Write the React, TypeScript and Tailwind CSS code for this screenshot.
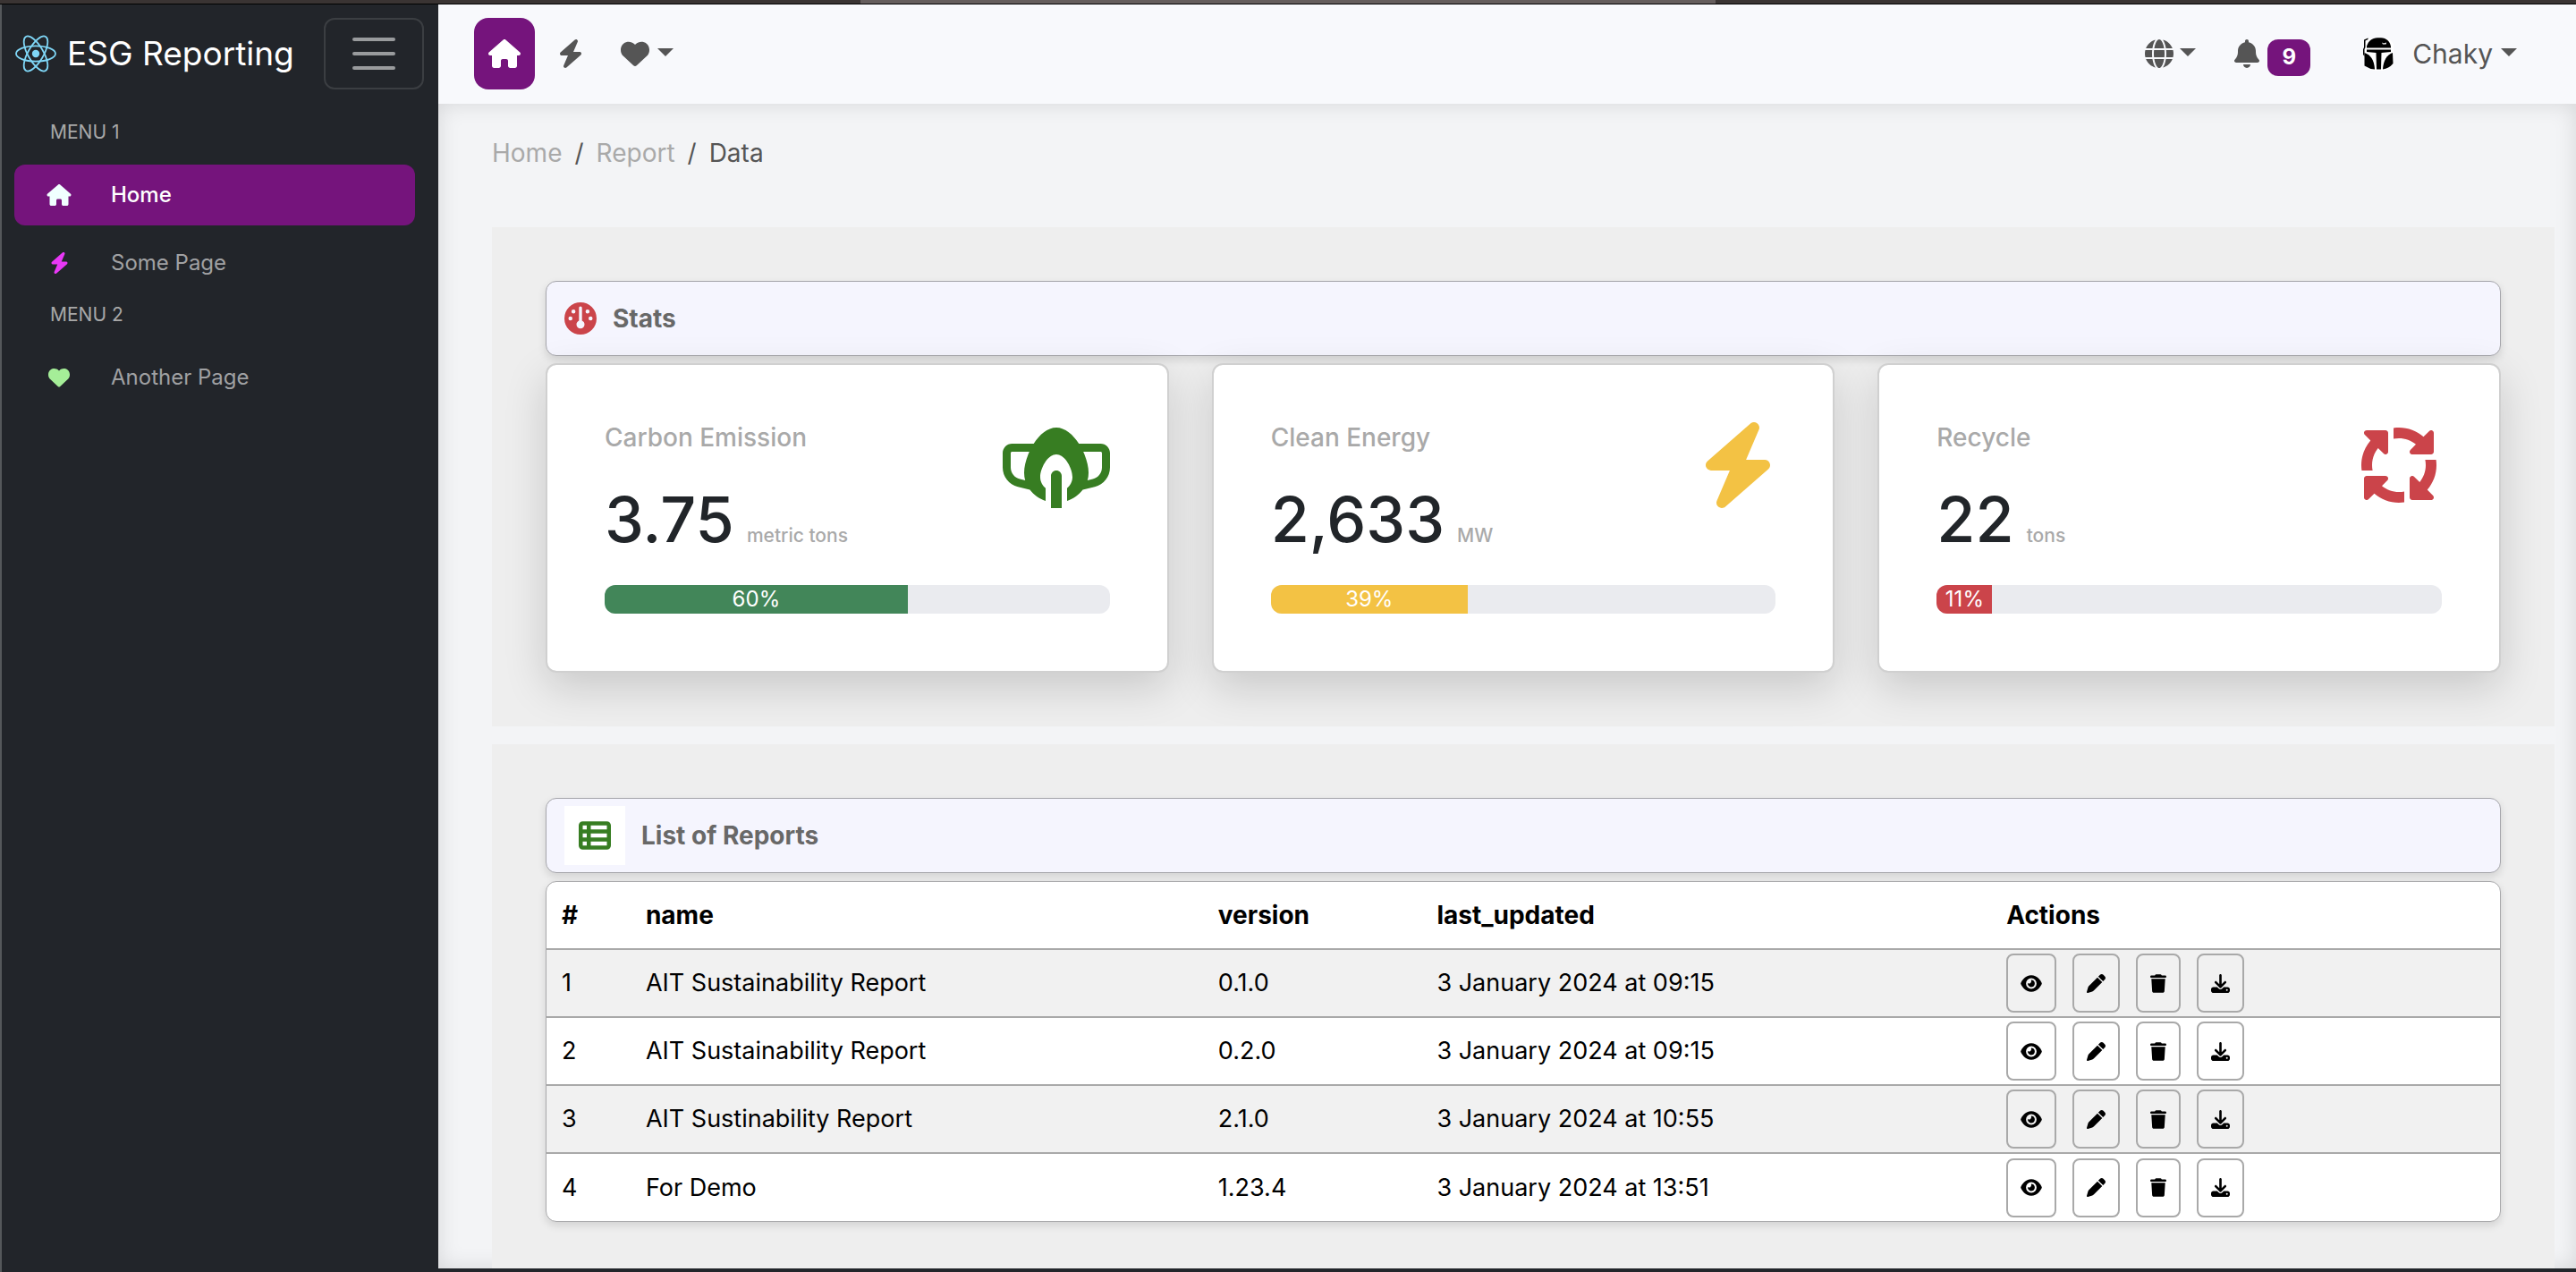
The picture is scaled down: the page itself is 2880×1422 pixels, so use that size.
import React from "react";
import {
  FaArrowsSpin,
  FaBell,
  FaBolt,
  FaDownload,
  FaEye,
  FaGauge,
  FaGlobe,
  FaHeart,
  FaHouse,
  FaMaskVentilator,
  FaPen,
  FaTableList,
  FaTrash,
} from "react-icons/fa6";

function ReactLogo() {
  return (
    <svg viewBox="0 0 46 42" className="h-[42px] w-[46px] shrink-0" fill="none" stroke="#7fd7f7" strokeWidth="1.8" aria-hidden="true">
      <circle cx="23" cy="21" r="4.2" fill="#7fd7f7" stroke="none" />
      <ellipse cx="23" cy="21" rx="22" ry="8.6" />
      <ellipse cx="23" cy="21" rx="22" ry="8.6" transform="rotate(60 23 21)" />
      <ellipse cx="23" cy="21" rx="22" ry="8.6" transform="rotate(120 23 21)" />
    </svg>
  );
}

function Helmet() {
  return (
    <svg viewBox="0 0 36 38" className="h-[38px] w-9" aria-hidden="true">
      <path d="M4 2 H30 L35 8 V32 L24 38 H12 L2 32 V8 Z" fill="#fff" />
      <path d="M5 12.500 V10.500 C7 4.500 11 1.500 17 1.200 H21 C27 1.500 31 5 32 11 V12.500 Z" fill="#000" />
      <path d="M22 6.500 L24 7.500 L27 6.500 L26.500 8.500 L23 8.500 Z" fill="#fff" />
      <path d="M2 3.500 L6.500 1.500 V3 L3.500 4.500 V12 L2.500 14 V22 L1 20 V14 L2 12 Z" fill="#000" />
      <path d="M5 14.500 H32 V17 L21.500 18 L21 36.500 H16 L15.500 18 L5 17 Z" fill="#000" />
      <path d="M2.500 18 C9 20 13.500 26 14 36.500 L9.500 36 L2.500 32.500 Z" fill="#000" />
      <path d="M34 18 L34.500 30 C31 34 27.500 36 23 36.500 C23.500 27 27.500 20 34 18 Z" fill="#000" />
    </svg>
  );
}

function Caret() {
  return (
    <svg viewBox="0 0 18 9" className="mb-1 h-[9px] w-[18px]" fill="#555" aria-hidden="true">
      <path d="M0 0 H18 L9 9 Z" />
    </svg>
  );
}

function MenuLabel({ children }: { children: React.ReactNode }) {
  return <h2 className="mb-3 flex h-12 items-center pl-10 text-[21px] text-[#a8a8a8]">{children}</h2>;
}

function MenuLink({ icon, label, active }: { icon: React.ReactNode; label: string; active?: boolean }) {
  return (
    <a
      href="#"
      aria-current={active ? "page" : undefined}
      className={
        active
          ? "flex h-[68px] items-center rounded-xl bg-[#75147c] pl-9 text-2xl font-medium text-white"
          : "flex h-[68px] items-center rounded-xl pl-9 text-2xl text-[#a0a1a3]"
      }
    >
      <span className="flex w-[72px] shrink-0">
        <span className="flex w-7 justify-center">{icon}</span>
      </span>
      {label}
    </a>
  );
}

function Sidebar() {
  return (
    <aside className="w-[490px] shrink-0 border-l-2 border-[#55585b] bg-[#22252a]">
      <div className="flex h-[110px] items-center justify-between pl-[15px] pr-4">
        <a href="#" className="flex items-center gap-3 text-[37px] text-white">
          <ReactLogo />
          ESG Reporting
        </a>
        <button
          type="button"
          aria-label="Toggle sidebar"
          className="flex h-20 w-28 flex-col items-center justify-center gap-3 rounded-xl border-2 border-[#3b3e42]"
        >
          <span className="h-1 w-12 rounded-full bg-[#999b9d]" />
          <span className="h-1 w-12 rounded-full bg-[#999b9d]" />
          <span className="h-1 w-12 rounded-full bg-[#999b9d]" />
        </button>
      </div>
      <nav aria-label="Sidebar" className="pl-[14px] pr-[26px] pt-[9px]">
        <MenuLabel>MENU 1</MenuLabel>
        <div className="flex flex-col gap-2">
          <MenuLink active label="Home" icon={<FaHouse className="h-6 w-7 text-[#f0ffff]" />} />
          <MenuLink label="Some Page" icon={<FaBolt className="h-6 w-[21px] text-[#e838f5]" />} />
        </div>
        <MenuLabel>MENU 2</MenuLabel>
        <MenuLink label="Another Page" icon={<FaHeart className="size-6 text-[#a5ee98]" />} />
      </nav>
    </aside>
  );
}

function Navbar() {
  return (
    <header className="flex h-[111px] items-center justify-between bg-[#f8f9fc] pb-px pl-10 pr-[66px] text-[#555]">
      <nav aria-label="Main" className="flex items-center">
        <a href="#" aria-label="Home" className="flex h-20 w-[68px] items-center justify-center rounded-2xl bg-[#75147c] text-white">
          <FaHouse className="h-8 w-9" />
        </a>
        <a href="#" aria-label="Energy" className="ml-[26px]">
          <FaBolt className="h-8 w-7" />
        </a>
        <button type="button" aria-label="Favourites" className="ml-[42px] flex items-center gap-[9px]">
          <FaHeart className="size-8" />
          <Caret />
        </button>
      </nav>
      <div className="flex items-center">
        <button type="button" aria-label="Language" className="flex items-center gap-[7px]">
          <FaGlobe className="size-8" />
          <Caret />
        </button>
        <button type="button" aria-label="Notifications, 9 new" className="ml-[43px] flex items-center gap-[9px]">
          <FaBell className="h-8 w-7" />
          <span className="mt-2 flex h-[41px] w-12 items-center justify-center rounded-xl bg-[#75147c] text-2xl font-bold text-white">9</span>
        </button>
        <button type="button" className="ml-[58px] flex items-center text-[30px] leading-10">
          <Helmet />
          <span className="ml-5 mr-[9px]">Chaky</span>
          <Caret />
        </button>
      </div>
    </header>
  );
}

function PanelHeader({ icon, title }: { icon: React.ReactNode; title: string }) {
  return (
    <div className="flex h-[84px] items-center gap-[18px] rounded-xl border border-[#a6a6ab] bg-[#f5f5fe] pl-5 shadow-[0_4px_10px_rgba(0,0,0,0.12)]">
      {icon}
      <h2 className="text-[28px] font-bold text-[#686868]">{title}</h2>
    </div>
  );
}

type Stat = {
  title: string;
  value: string;
  unit: string;
  percent: number;
  bar: string;
  icon: React.ReactNode;
};

const stats: Stat[] = [
  {
    title: "Carbon Emission",
    value: "3.75",
    unit: "metric tons",
    percent: 60,
    bar: "bg-[#428659]",
    icon: <FaMaskVentilator className="h-24 w-[120px] text-[#377d22]" />,
  },
  {
    title: "Clean Energy",
    value: "2,633",
    unit: "MW",
    percent: 39,
    bar: "bg-[#f3c244]",
    icon: <FaBolt className="h-24 w-[84px] text-[#f3c244]" />,
  },
  {
    title: "Recycle",
    value: "22",
    unit: "tons",
    percent: 11,
    bar: "bg-[#cb444a]",
    icon: <FaArrowsSpin className="size-24 text-[#cb444a]" />,
  },
];

function StatCard({ stat }: { stat: Stat }) {
  return (
    <article className="flex-1 rounded-xl border-2 border-[#d0d0d0] bg-white bg-clip-padding p-16 shadow-[0_16px_48px_rgba(0,0,0,0.16)]">
      <div className="flex items-start justify-between">
        <div>
          <h3 className="text-[28px] font-medium leading-[34px] text-[#a9a9a9]">{stat.title}</h3>
          <p className="mt-8 flex items-baseline gap-[14px] text-[70px] font-medium leading-[86px] text-[#212529]">
            {stat.value}
            <span className="text-[21px] leading-6 text-[#a9a9a9]">{stat.unit}</span>
          </p>
        </div>
        {stat.icon}
      </div>
      <div
        role="progressbar"
        aria-label={stat.title}
        aria-valuenow={stat.percent}
        aria-valuemin={0}
        aria-valuemax={100}
        className="mt-[30px] flex h-8 overflow-hidden rounded-xl bg-[#eaebef] text-2xl text-white"
      >
        <div className={`flex items-center justify-center ${stat.bar}`} style={{ width: `${stat.percent}%` }}>
          {stat.percent}%
        </div>
      </div>
    </article>
  );
}

const reports = [
  { id: 1, name: "AIT Sustainability Report", version: "0.1.0", updated: "3 January 2024 at 09:15" },
  { id: 2, name: "AIT Sustainability Report", version: "0.2.0", updated: "3 January 2024 at 09:15" },
  { id: 3, name: "AIT Sustinability Report", version: "2.1.0", updated: "3 January 2024 at 10:55" },
  { id: 4, name: "For Demo", version: "1.23.4", updated: "3 January 2024 at 13:51" },
];

const actions = [
  { label: "View", icon: <FaEye className="h-[21px] w-6" /> },
  { label: "Edit", icon: <FaPen className="size-[21px]" /> },
  { label: "Delete", icon: <FaTrash className="h-[21px] w-[18px]" /> },
  { label: "Download", icon: <FaDownload className="size-[21px]" /> },
];

function ReportTable() {
  return (
    <div className="mt-[9px] overflow-hidden rounded-xl border border-[#a9a9ab] bg-white shadow-[0_4px_10px_rgba(0,0,0,0.12)]">
      <table className="w-full table-fixed border-collapse text-left text-[27px] leading-[42px] text-black">
        <thead className="text-[28px]">
          <tr className="h-[75px] border-b-2 border-[#a9a9a9]">
            <th scope="col" className="w-[4.3%] pl-[17px] font-bold">#</th>
            <th scope="col" className="w-[29.3%] pl-[17px] font-bold">name</th>
            <th scope="col" className="w-[11.2%] pl-[17px] font-bold">version</th>
            <th scope="col" className="w-[29.2%] pl-[17px] font-bold">last_updated</th>
            <th scope="col" className="pl-4 font-bold">Actions</th>
          </tr>
        </thead>
        <tbody>
          {reports.map((r) => (
            <tr key={r.id} className="h-[76px] border-b-2 border-[#a9a9a9] last:border-b-0 odd:bg-[#f1f1f1]">
              <td className="pl-[17px]">{r.id}</td>
              <td className="pl-[17px]">{r.name}</td>
              <td className="pl-[17px]">{r.version}</td>
              <td className="pl-[17px]">{r.updated}</td>
              <td className="pl-4">
                <div className="flex gap-[18px]">
                  {actions.map((a) => (
                    <button
                      key={a.label}
                      type="button"
                      aria-label={`${a.label} report ${r.id}`}
                      className="flex h-[66px] items-center rounded-lg border-2 border-[#a9a9a9] px-[14px]"
                    >
                      {a.icon}
                    </button>
                  ))}
                </div>
              </td>
            </tr>
          ))}
        </tbody>
      </table>
    </div>
  );
}

export default function App() {
  return (
    <div className="flex min-h-screen flex-col bg-[#22252a] font-['Inter',sans-serif]">
      <div className="flex h-[5px] border-b border-black bg-[#3a3433]">
        <div className="ml-[33.4%] w-[33.2%] bg-[#665e5d]" />
      </div>
      <div className="flex flex-1">
        <Sidebar />
        <div className="mb-1 flex min-w-0 flex-1 flex-col">
          <Navbar />
          <main className="flex flex-1 flex-col bg-[#f3f4f6] pl-[60px] pr-6 pt-[34px] shadow-[inset_0_0_24px_rgba(0,0,0,0.12)]">
            <nav aria-label="Breadcrumb" className="mb-[62px] text-[28px] leading-[42px] text-[#555]">
              <ol className="flex gap-[14px]">
                <li><a href="#" className="text-[#a9a9a9]">Home</a></li>
                <li aria-hidden="true">/</li>
                <li><a href="#" className="text-[#a9a9a9]">Report</a></li>
                <li aria-hidden="true">/</li>
                <li aria-current="page">Data</li>
              </ol>
            </nav>
            <section className="bg-[#eee] p-[60px]">
              <PanelHeader title="Stats" icon={<FaGauge className="size-9 text-[#cb444a]" />} />
              <div className="mt-2 flex gap-12">
                {stats.map((s) => (
                  <StatCard key={s.title} stat={s} />
                ))}
              </div>
            </section>
            <section className="mt-5 flex-1 bg-[#eee] px-[60px] pt-[60px]">
              <PanelHeader
                title="List of Reports"
                icon={
                  <span className="flex h-[66px] w-[68px] items-center justify-center bg-white">
                    <FaTableList className="size-9 text-[#377d22]" />
                  </span>
                }
              />
              <ReportTable />
            </section>
          </main>
        </div>
      </div>
    </div>
  );
}
